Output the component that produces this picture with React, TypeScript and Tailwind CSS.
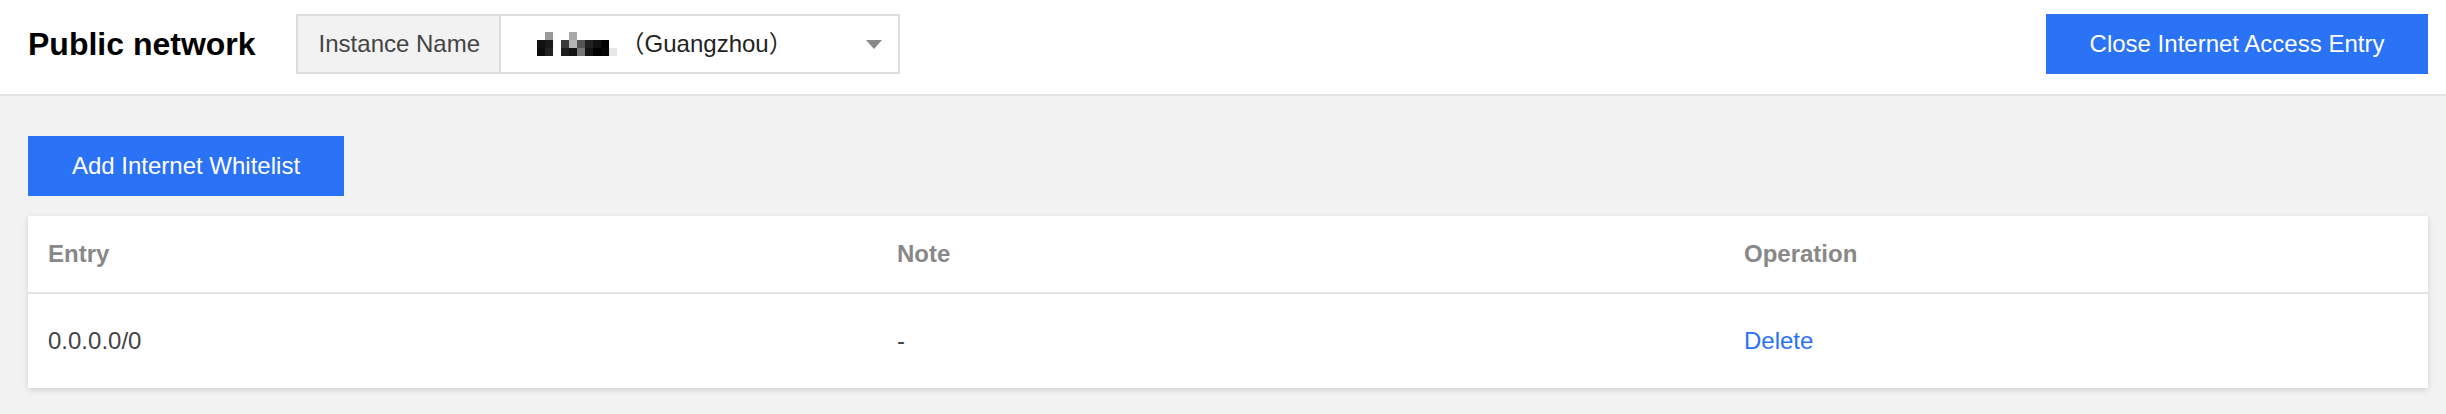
import React from 'react'

const BLUE = 'bg-[#2a72f6]'

// pixelated (censored) instance name, drawn as a mosaic
const MOSAIC: [number, number, string][] = [
  [1, 0, '#9a9a9a'], [4, 0, '#a8a8a8'],
  [0, 1, '#111'], [1, 1, '#1a1a1a'], [3, 1, '#3a3a3a'], [4, 1, '#b5b5b5'], [5, 1, '#555'], [6, 1, '#222'], [7, 1, '#111'], [8, 1, '#000'],
  [0, 2, '#0d0d0d'], [1, 2, '#222'], [3, 2, '#1e1e1e'], [4, 2, '#111'], [5, 2, '#777'], [6, 2, '#151515'], [7, 2, '#000'], [8, 2, '#050505'], [9, 2, '#e6e6e6'],
]

function Mosaic() {
  return (
    <svg width="82" height="24" viewBox="0 0 82 24" className="shrink-0">
      {MOSAIC.map(([c, r, fill], i) => (
        <rect key={i} x={c * 8} y={r * 8} width="8" height="8" fill={fill} />
      ))}
    </svg>
  )
}

export default function App() {
  return (
    <div className="min-h-[414px] bg-[#f2f2f2] font-['Liberation_Sans','Noto_Sans_CJK_SC',sans-serif]">
      {/* top bar */}
      <div className="h-[96px] bg-white border-b-2 border-[#e2e2e2] flex items-start pt-[14px] pl-[28px] pr-[18px]">
        <div className="h-[60px] flex items-center text-[32px] font-bold text-black leading-none">
          Public network
        </div>
        <div className="ml-[40px] h-[60px] w-[604px] flex border-2 border-[#dddddd]">
          <div className="w-[203px] bg-[#f2f2f2] border-r-2 border-[#dddddd] flex items-center pl-[21px] text-[24px] text-[#444]">
            Instance Name
          </div>
          <div className="flex-1 flex items-center pl-[36px] pr-[16px] bg-white">
            <Mosaic />
            <span className="ml-[2px] text-[24px] text-[#222] whitespace-nowrap">（Guangzhou）</span>
            <svg width="16" height="9" viewBox="0 0 16 9" className="ml-auto">
              <path d="M0 0h16L8 9z" fill="#888" />
            </svg>
          </div>
        </div>
        <button className={`ml-auto h-[60px] w-[382px] ${BLUE} text-white text-[24px] flex items-center justify-center`}>
          Close Internet Access Entry
        </button>
      </div>

      <div className="pt-[40px] pl-[28px] pr-[18px] pb-[24px]">
        <button className={`h-[60px] w-[316px] ${BLUE} text-white text-[24px] flex items-center justify-center`}>
          Add Internet Whitelist
        </button>

        <div className="mt-[20px] bg-white shadow-[0_2px_6px_rgba(0,0,0,0.14)]">
          <div className="grid grid-cols-[849px_847px_1fr] h-[78px] items-center border-b-2 border-[#e2e2e2] text-[24px] font-bold text-[#888]">
            <div className="pl-[20px]">Entry</div>
            <div className="pl-[20px]">Note</div>
            <div className="pl-[20px]">Operation</div>
          </div>
          <div className="grid grid-cols-[849px_847px_1fr] h-[94px] items-center text-[24px] text-[#444]">
            <div className="pl-[20px]">0.0.0.0/0</div>
            <div className="pl-[20px]">-</div>
            <div className="pl-[20px]">
              <a className="text-[#2a72f6] cursor-pointer">Delete</a>
            </div>
          </div>
        </div>
      </div>
    </div>
  )
}
